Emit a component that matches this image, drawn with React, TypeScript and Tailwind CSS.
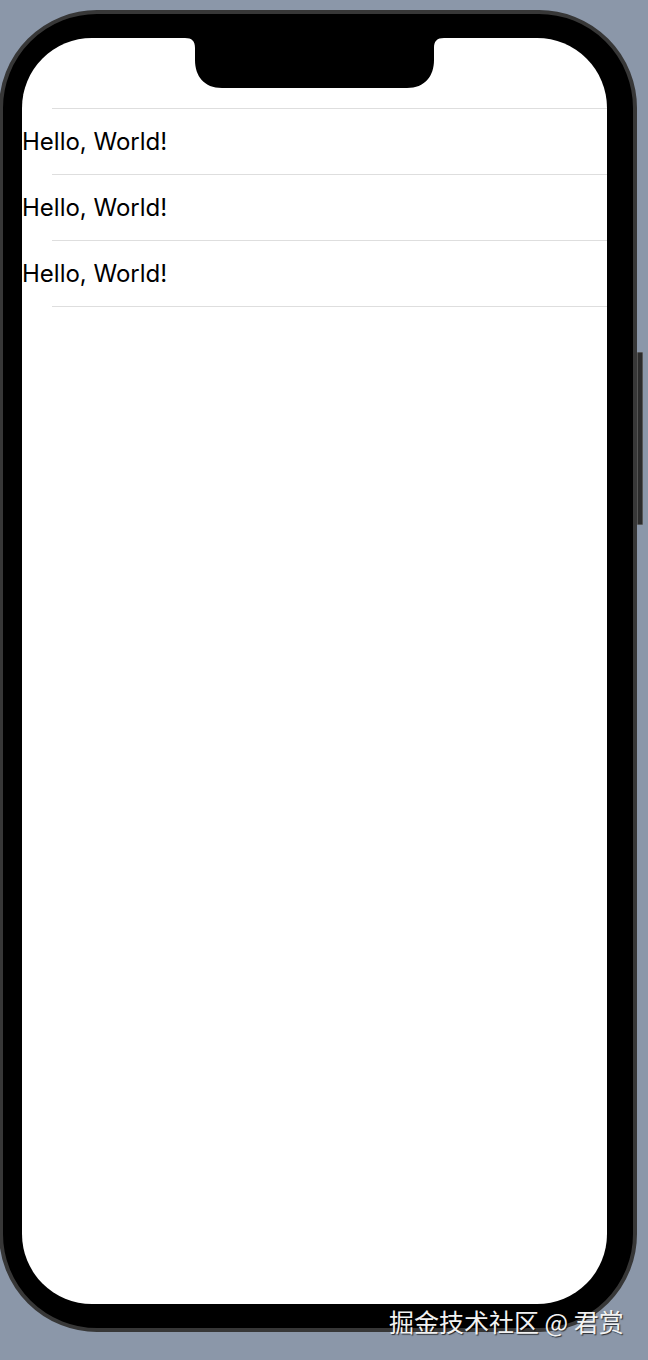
import React from "react";

const rows = ["Hello, World!", "Hello, World!", "Hello, World!"];

function Notch() {
  // notch cut-out with small inverse corners where it meets the screen's top edge
  return (
    <svg
      className="absolute left-[163px] top-0"
      width="259"
      height="50"
      viewBox="0 0 259 50"
    >
      <path
        d="M0 0 H259 C252 0 249 3 249 10 V22 C249 38 240 50 222 50 H37 C19 50 10 38 10 22 V10 C10 3 7 0 0 0 Z"
        fill="#000"
      />
    </svg>
  );
}

export default function App() {
  return (
    <div
      className="relative flex h-[1360px] w-[648px] flex-col overflow-hidden bg-[#8b97a9] pt-[10px]"
      style={{ fontFamily: "Inter, 'Liberation Sans', sans-serif" }}
    >
      <div className="ml-[-1px] flex h-[1322px] w-[638px] items-start rounded-[98px] border-4 border-[#373737] bg-black pl-[19px] pt-[24px]">
        <div className="relative h-[1266px] w-[585px] overflow-hidden rounded-[70px] bg-white">
          <Notch />
          <div className="flex flex-col pt-[70px]">
            <div className="ml-[30px] h-px bg-[#dedede]" />
            {rows.map((text, i) => (
              <div key={i} className="flex flex-col">
                <div className="flex h-[65px] items-center text-[24px] leading-none text-black">
                  {text}
                </div>
                <div className="ml-[30px] h-px bg-[#dedede]" />
              </div>
            ))}
          </div>
        </div>
      </div>

      {/* side button */}
      <div className="absolute left-[637px] top-[352px] h-[173px] w-[6px] rounded-[1px] border border-[#555] bg-[#2b2b2b]" />

      {/* watermark */}
      <div
        className="absolute left-[389px] top-[1305px] text-[25px] leading-[32px] text-[#f2f2f2] [text-shadow:1px_1px_1px_rgba(0,0,0,0.7)]"
        style={{ fontFamily: "'Noto Sans CJK SC', sans-serif" }}
      >
        掘金技术社区 @ 君赏
      </div>
    </div>
  );
}
